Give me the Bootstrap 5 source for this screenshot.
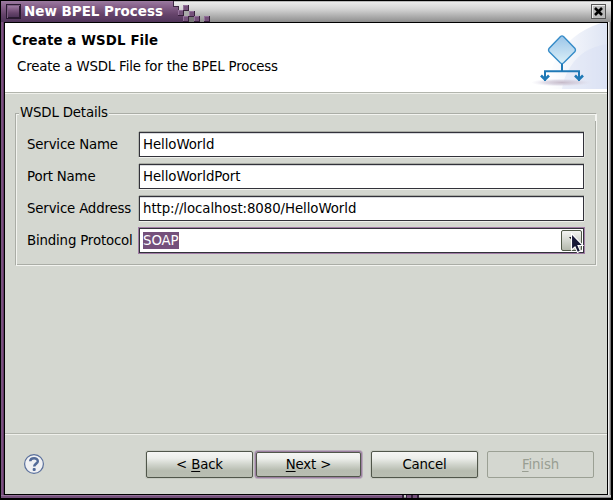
<!DOCTYPE html>
<html lang="en">
<head>
<meta charset="utf-8">
<meta name="viewport" content="width=device-width, initial-scale=1">
<title>New BPEL Process</title>
<link href="https://cdn.jsdelivr.net/npm/bootstrap@5.3.0/dist/css/bootstrap.min.css" rel="stylesheet">
<style>
html, body { height: 100%; }
body { background: #000; font: 13.33px/16px "DejaVu Sans", Verdana, sans-serif; letter-spacing: -.17px; color: #000; overflow: hidden; }
.win { width: 611px; height: 498px; padding: 1px 0 0 1px; box-sizing: border-box; background: #000; }
.win-title { height: 21px; background: linear-gradient(#888 0, #ececec 1px, #d5d5d5 8px, #999 19px, #8b8b8b 21px); }
.win-title svg { display: block; }
.win-title .caption { font: bold 13.2px/16px "DejaVu Sans", sans-serif; letter-spacing: 0; fill: #fff; }
.win-mid { height: 473px; }
.edge-l { width: 3px; background: linear-gradient(90deg, #73587a 0 1px, #7f4a83 1px 2px, #5e3c62 2px); }
.edge-r { width: 3px; background: linear-gradient(90deg, #eee 0 1px, #b7b7b7 1px 2px, #777 2px); }
.win-foot { height: 3px; }
.win-foot svg { display: block; }
.client { width: 604px; border: 1px solid #000; background: #d4d7d0; }
.banner { height: 69px; background: #fff; }
.banner h1 { font-size: 13.33px; line-height: 16px; font-weight: bold; letter-spacing: .13px; margin: 0; padding: 10px 0 0 7px; }
.banner p { margin: 0; padding: 10px 0 0 12px; }
.banner svg { display: block; }
.rule { height: 2px; background: linear-gradient(#b2b5ad 0 1px, #f0f1ec 1px); }
.group-box { margin: 10px 10px 0 10px; width: 582px; height: 162px; }
.frame-top { height: 17px; }
.frame-top .tick { width: 4px; height: 8px; border-top: 1px solid #aaada6; border-left: 1px solid #aaada6; box-shadow: inset 1px 1px #f3f4f0; }
.frame-top .run { height: 8px; border-top: 1px solid #aaada6; border-right: 1px solid #f3f4f0; box-shadow: inset -1px 1px 0 #f3f4f0; }
.frame-top .legend-text { padding: 0 1px; }
.frame-body { height: 153px; margin-top: -8px; border: 1px solid #aaada6; border-top: 0; border-right-color: #f3f4f0; border-bottom-color: #f3f4f0; box-shadow: inset 1px 0 #f3f4f0, inset -1px -1px #aaada6; padding: 19px 11px 0 11px; }
.field-row { height: 25px; margin-bottom: 7px; }
.field-row label { width: 112px; }
.field-row .entry { width: 445px; height: 25px; border: 1px solid #32323a; border-radius: 0; padding: 0 3px; font: inherit; letter-spacing: -.07px; line-height: 23px; color: #000; background: #fff; box-shadow: 0 -1px #a9aca5, -1px 0 #b5b8b1, 0 1px #f0f1ed, 1px 0 #e4e6e1, inset 0 1px #d9dade; }
.field-row .entry.focused { box-shadow: 0 0 0 1px #a07ba4; padding-right: 1px; }
.picked { background: #75507b; color: #fff; line-height: 17px; }
.drop { width: 21px; height: 21px; border: 1px solid #4f5847; border-radius: 2px; background: linear-gradient(#f3f4f2, #d0d4cc 55%, #b4b9ad); position: relative; }
.drop svg { position: absolute; left: 7px; top: 2px; z-index: 2; }
.actions { height: 59px; padding: 0 13px 0 18px; }
.dlg-btn { width: 107px; height: 27px; padding: 0; font: inherit; letter-spacing: -.17px; line-height: 24px; border: 1px solid #50564a; border-radius: 2px; color: #000; background: linear-gradient(#f5f6f4, #eceeea 25%, #d0d4cc 50%, #b7bcb0 75%, #b9beb2); box-shadow: 0 0 0 1px #c6cac1; }
.dlg-btn.default { width: 105px; height: 25px; line-height: 22px; margin: 0 10px 0 3px; box-shadow: 0 0 0 1px #9a7f9f, 0 0 0 2px #b9acbb; }
.dlg-btn.cancel { margin-right: 9px; }
.dlg-btn:disabled { background: transparent; color: #999e92; border-color: #9ba094; opacity: 1; box-shadow: none; }
.dlg-btn u { text-decoration-thickness: 1px; text-underline-offset: 2px; text-decoration-skip-ink: none; }
</style>
</head>
<body>
<div class="win d-flex flex-column">
  <div class="win-title flex-shrink-0">
    <svg width="610" height="21" viewBox="1 1 610 21" shape-rendering="crispEdges">
      <defs>
        <linearGradient id="tp" x1="0" y1="0" x2="0" y2="1"><stop offset="0" stop-color="#9b7aa0"/><stop offset=".25" stop-color="#87628b"/><stop offset=".65" stop-color="#65436a"/><stop offset="1" stop-color="#50355a"/></linearGradient>
        <g id="blk"><rect width="6" height="6" fill="#38213d"/><rect width="5" height="5" fill="#93709a"/><rect x="1" y="1" width="4" height="4" fill="#74507a"/></g>
      </defs>
      <path d="M1 1H173V6H178V11H183V17H189V22H1z" fill="url(#tp)"/>
      <path d="M173 1V6H178V11H183" fill="none" stroke="#3d2842"/>
      <use href="#blk" x="183" y="5"/><use href="#blk" x="178" y="10"/><use href="#blk" x="189" y="11"/><use href="#blk" x="183" y="16"/><use href="#blk" x="194" y="16"/><use href="#blk" x="204" y="16"/>
      <rect x="184" y="11" width="5" height="5" fill="#aaa"/><rect x="189" y="17" width="5" height="5" fill="#777"/>
      <rect x="6" y="4" width="15" height="15" fill="#291a30"/><path d="M7 18V5H20" fill="none" stroke="#7c5f82"/><rect x="8" y="6" width="11" height="11" fill="url(#tp)"/>
      <rect x="591" y="4" width="15" height="15" fill="#555"/><rect x="592" y="5" width="13" height="13" fill="#eee"/><rect x="593" y="6" width="12" height="12" fill="#bbb"/>
      <path d="M595 8l7 7M602 8l-7 7" stroke="#000" stroke-width="2.6" shape-rendering="auto"/>
      <text class="caption" x="24" y="16" textLength="139" lengthAdjust="spacingAndGlyphs">New BPEL Process</text>
    </svg>
  </div>
  <div class="win-mid d-flex flex-shrink-0">
    <div class="edge-l"></div>
    <main class="client d-flex flex-column">
      <header class="banner d-flex justify-content-between flex-shrink-0">
        <div><h1>Create a WSDL File</h1><p>Create a WSDL File for the BPEL Process</p></div>
        <svg width="77" height="69" viewBox="530 23 77 69">
          <defs>
            <linearGradient id="sky" x1="0" y1="0" x2="1" y2="0"><stop offset="0" stop-color="#fff"/><stop offset="1" stop-color="#d6def1"/></linearGradient>
            <linearGradient id="dia" x1="0" y1="0" x2="0" y2="1"><stop offset="0" stop-color="#9cc5e8"/><stop offset="1" stop-color="#dcf0f8"/></linearGradient>
            <radialGradient id="shade"><stop offset="0" stop-color="#c6bac9"/><stop offset=".55" stop-color="#d4cedd" stop-opacity=".75"/><stop offset="1" stop-color="#e5e5f1" stop-opacity="0"/></radialGradient>
          </defs>
          <path d="M607 23H601Q570 33 556 59Q549 71 548 89H607z" fill="url(#sky)" opacity=".8"/>
          <path d="M607 44Q582 48 571 66Q564 76 562 89H607z" fill="#d6def2" opacity=".42"/>
          <ellipse cx="562" cy="82.5" rx="31" ry="4" fill="url(#shade)"/>
          <path d="M562 64V71.300M545 81V71.300H579V81" fill="none" stroke="#1f79b6" stroke-width="2"/>
          <path d="M541 75.500l4 4 4-4M575 75.500l4 4 4-4" fill="none" stroke="#1f79b6" stroke-width="2.600"/>
          <path d="M560.500 36.500Q562 35.300 563.500 36.500L575 48.500Q576 50 575 51.500L563.500 63Q562 64.200 560.500 63L549 51.500Q548 50 549 48.500z" fill="url(#dia)" stroke="#358bc8" stroke-width="1.400"/>
        </svg>
      </header>
      <div class="rule flex-shrink-0"></div>
      <section class="group-box flex-shrink-0">
        <div class="frame-top d-flex align-items-end">
          <div class="tick"></div><div class="legend-text">WSDL Details</div><div class="run flex-grow-1"></div>
        </div>
        <div class="frame-body">
          <div class="field-row d-flex align-items-center"><label for="sn">Service Name</label><input id="sn" class="entry" value="HelloWorld"></div>
          <div class="field-row d-flex align-items-center"><label for="pn">Port Name</label><input id="pn" class="entry" value="HelloWorldPort"></div>
          <div class="field-row d-flex align-items-center"><label for="sa">Service Address</label><input id="sa" class="entry" value="http://localhost:8080/HelloWorld"></div>
          <div class="field-row d-flex align-items-center"><label>Binding Protocol</label>
            <div class="entry focused d-flex align-items-center justify-content-between"><span class="picked">SOAP</span>
              <div class="drop"><svg width="16" height="22" viewBox="569 233 16 22"><path d="M569 237h7l-3.500 4z" fill="#111"/><path d="M571.500 233.500V250L575 247L577.500 252.500L580.500 251L578 245.500H583z" fill="#171938" stroke="#fff" stroke-width="1.100"/></svg></div>
            </div>
          </div>
        </div>
      </section>
      <div class="rule mt-auto flex-shrink-0"></div>
      <footer class="actions d-flex align-items-center flex-shrink-0">
        <svg class="me-auto" width="22" height="22" viewBox="0 0 22 22" role="img" aria-label="Help">
          <circle cx="11" cy="10" r="9.400" fill="#f0f1f3" stroke="#596f9b" stroke-width="1.200"/>
          <path d="M7.200 7.300C7.400 3.300 14.800 3.200 14.800 7.200C14.800 9.700 11.200 9.600 11.200 12.600" fill="none" stroke="#536b98" stroke-width="2.500"/><rect x="9.700" y="14" width="3" height="3" rx="1" fill="#536b98"/>
        </svg>
        <button class="btn dlg-btn">&lt; <u>B</u>ack</button>
        <button class="btn dlg-btn default"><u>N</u>ext &gt;</button>
        <button class="btn dlg-btn cancel">Cancel</button>
        <button class="btn dlg-btn" disabled><u>F</u>inish</button>
      </footer>
    </main>
    <div class="edge-r"></div>
  </div>
  <div class="win-foot flex-shrink-0">
    <svg width="610" height="3" viewBox="1 495 610 3" shape-rendering="crispEdges"><path d="M1 495H611V498H1z" fill="#c8c8c8"/><path d="M1 497H611V498H1z" fill="#888"/><path d="M1 495H402V498H1z" fill="#75507b"/><path d="M1 495H402V496H1z" fill="#94729a"/><path d="M402 495h2v3h-2zM406 495h1v3h-1zM411 495h2v3h-2zM417 495h2v3h-2z" fill="#33203a"/><path d="M407 495h4v3h-4zM413 495h4v3h-4z" fill="#75507b"/></svg>
  </div>
</div>
<script src="https://cdn.jsdelivr.net/npm/bootstrap@5.3.0/dist/js/bootstrap.bundle.min.js"></script>
</body>
</html>
